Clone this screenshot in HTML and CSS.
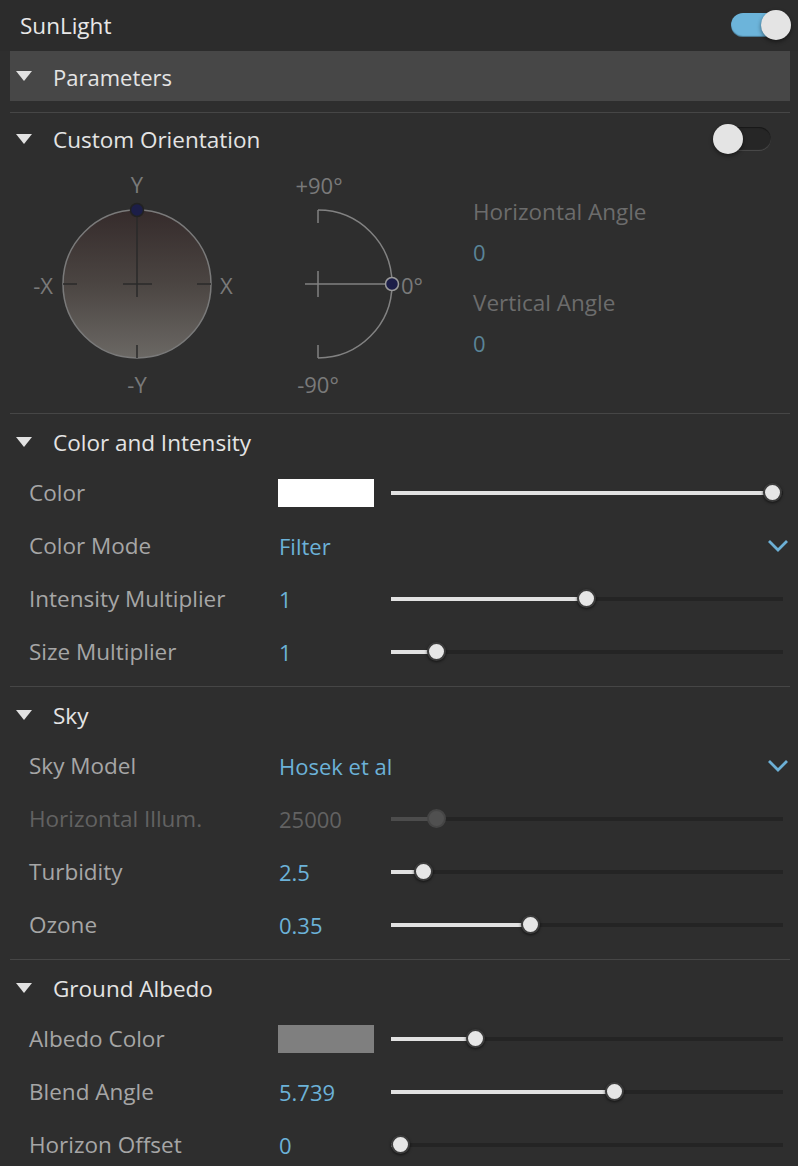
FILE: index.html
```html
<!DOCTYPE html>
<html>
<head>
<meta charset="utf-8">
<link rel="stylesheet" href="styles.css">
</head>
<body>
<div class="panel">
  <div class="topbar">
    <span class="title">SunLight</span>
    <span class="toggle on"><span class="knob"></span></span>
  </div>
  <div class="group-bar">
    <span class="tri"></span>
    <span class="group-title">Parameters</span>
  </div>

  <div class="section first">
    <div class="sec-head">
      <span class="tri"></span>
      <span class="sec-title">Custom Orientation</span>
      <span class="toggle off"><span class="knob"></span></span>
    </div>
    <div class="orient">
      <svg class="orient-svg" width="440" height="250" viewBox="0 163 440 250">
        <defs>
          <linearGradient id="sky" x1="0" y1="0" x2="0" y2="1">
            <stop offset="0" stop-color="#352b2b"/>
            <stop offset="0.5" stop-color="#4b4542"/>
            <stop offset="1" stop-color="#6b6864"/>
          </linearGradient>
        </defs>
        <circle cx="137" cy="284" r="74" fill="url(#sky)" stroke="#7a7a7a" stroke-width="1.5"/>
        <g stroke="#2a2a2a" stroke-width="1.5">
          <line x1="137" y1="212" x2="137" y2="297"/>
          <line x1="123" y1="284" x2="152" y2="284"/>
          <line x1="63" y1="284" x2="77" y2="284"/>
          <line x1="197" y1="284" x2="211" y2="284"/>
          <line x1="137" y1="345" x2="137" y2="358"/>
        </g>
        <circle cx="137" cy="210" r="6.5" fill="#1c1e48" stroke="#222" stroke-width="1.5"/>
        <g class="ax">
          <text x="137" y="193" text-anchor="middle">Y</text>
          <text x="137" y="393" text-anchor="middle">-Y</text>
          <text x="53" y="294" text-anchor="end">-X</text>
          <text x="220" y="294">X</text>
          <text x="319" y="194" text-anchor="middle">+90°</text>
          <text x="318" y="393" text-anchor="middle">-90°</text>
          <text x="401" y="294">0°</text>
        </g>
        <g stroke="#828282" stroke-width="1.5" fill="none">
          <path d="M318 210 A74 74 0 0 1 318 358"/>
          <line x1="318" y1="210" x2="318" y2="223"/>
          <line x1="318" y1="345" x2="318" y2="358"/>
          <line x1="318" y1="271" x2="318" y2="297"/>
          <line x1="305" y1="284" x2="392" y2="284"/>
        </g>
        <circle cx="392" cy="284" r="6.5" fill="#1c1e48" stroke="#9a9a9a" stroke-width="1.5"/>
      </svg>
      <div class="angles">
        <div class="ang-label">Horizontal Angle</div>
        <div class="ang-val">0</div>
        <div class="ang-label">Vertical Angle</div>
        <div class="ang-val">0</div>
      </div>
    </div>
  </div>

  <div class="section">
    <div class="sec-head">
      <span class="tri"></span>
      <span class="sec-title">Color and Intensity</span>
    </div>
    <div class="row">
      <span class="label">Color</span>
      <span class="val"><span class="swatch white"></span></span>
      <span class="slider" style="--p:1"><span class="fill"></span><span class="thumb"></span></span>
    </div>
    <div class="row">
      <span class="label">Color Mode</span>
      <span class="dropdown">
        <span class="val blue">Filter</span>
        <svg class="chev" width="22" height="14" viewBox="0 0 22 14"><path d="M2 2 L11 11 L20 2" fill="none" stroke="#6cb0d6" stroke-width="2.8"/></svg>
      </span>
    </div>
    <div class="row">
      <span class="label">Intensity Multiplier</span>
      <span class="val blue">1</span>
      <span class="slider" style="--p:0.499"><span class="fill"></span><span class="thumb"></span></span>
    </div>
    <div class="row">
      <span class="label">Size Multiplier</span>
      <span class="val blue">1</span>
      <span class="slider" style="--p:0.097"><span class="fill"></span><span class="thumb"></span></span>
    </div>
  </div>

  <div class="section">
    <div class="sec-head">
      <span class="tri"></span>
      <span class="sec-title">Sky</span>
    </div>
    <div class="row">
      <span class="label">Sky Model</span>
      <span class="dropdown">
        <span class="val blue">Hosek et al</span>
        <svg class="chev" width="22" height="14" viewBox="0 0 22 14"><path d="M2 2 L11 11 L20 2" fill="none" stroke="#6cb0d6" stroke-width="2.8"/></svg>
      </span>
    </div>
    <div class="row disabled">
      <span class="label">Horizontal Illum.</span>
      <span class="val">25000</span>
      <span class="slider" style="--p:0.097"><span class="fill"></span><span class="thumb"></span></span>
    </div>
    <div class="row">
      <span class="label">Turbidity</span>
      <span class="val blue">2.5</span>
      <span class="slider" style="--p:0.062"><span class="fill"></span><span class="thumb"></span></span>
    </div>
    <div class="row">
      <span class="label">Ozone</span>
      <span class="val blue">0.35</span>
      <span class="slider" style="--p:0.349"><span class="fill"></span><span class="thumb"></span></span>
    </div>
  </div>

  <div class="section">
    <div class="sec-head">
      <span class="tri"></span>
      <span class="sec-title">Ground Albedo</span>
    </div>
    <div class="row">
      <span class="label">Albedo Color</span>
      <span class="val"><span class="swatch grey"></span></span>
      <span class="slider" style="--p:0.201"><span class="fill"></span><span class="thumb"></span></span>
    </div>
    <div class="row">
      <span class="label">Blend Angle</span>
      <span class="val blue">5.739</span>
      <span class="slider" style="--p:0.574"><span class="fill"></span><span class="thumb"></span></span>
    </div>
    <div class="row">
      <span class="label">Horizon Offset</span>
      <span class="val blue">0</span>
      <span class="slider" style="--p:0"><span class="fill"></span><span class="thumb"></span></span>
    </div>
  </div>
</div>
</body>
</html>
```

FILE: styles.css
```css
html, body {
  margin: 0;
  padding: 0;
  background: #2e2e2e;
}
body {
  font-family: "Open Sans", "Noto Sans", sans-serif;
  width: 798px;
  height: 1166px;
  overflow: hidden;
}
.panel {
  display: flex;
  flex-direction: column;
}
.topbar {
  height: 51px;
  display: flex;
  align-items: center;
  justify-content: space-between;
  padding: 0 9px 0 20px;
  background: #2c2c2c;
}
.title {
  color: #e8e8e8;
  font-size: 22.5px;
}
.toggle {
  position: relative;
  height: 24px;
  border-radius: 12px;
  display: inline-block;
  flex: none;
}
.toggle.on {
  width: 58px;
  background: #6cb4da;
  box-shadow: inset 0 -1px 1px rgba(0,0,0,0.35);
  margin-top: -2px;
}
.toggle.off {
  width: 52px;
  background: #262626;
  box-shadow: inset 0 -1px 1px rgba(255,255,255,0.18), inset 0 1px 1px rgba(0,0,0,0.4);
  margin-right: 27px;
}
.knob {
  position: absolute;
  top: -3px;
  width: 30px;
  height: 30px;
  border-radius: 50%;
  background: #e4e4e4;
  box-shadow: 0 2px 4px rgba(0,0,0,0.45);
}
.toggle.on .knob { right: -2px; }
.toggle.off .knob { left: -6px; }

.tri {
  width: 0;
  height: 0;
  border-left: 8px solid transparent;
  border-right: 8px solid transparent;
  border-top: 10px solid #e2e2e2;
  margin-left: 16px;
  margin-right: 21px;
  flex: none;
}
.group-bar {
  height: 50px;
  margin: 0 8px 0 10px;
  background: #474747;
  display: flex;
  align-items: center;
}
.group-bar .tri { margin-left: 6px; }
.group-title {
  color: #e4e4e4;
  font-size: 22px;
  margin-top: 1px;
}
.section {
  border-top: 1px solid #464646;
  margin: 0 8px 0 10px;
  padding-bottom: 8px;
}
.section.first {
  margin-top: 11px;
  padding-bottom: 0;
}
.sec-head {
  height: 48px;
  padding-top: 4px;
  display: flex;
  align-items: center;
  margin-left: -10px;
  margin-right: -8px;
}
.section.first .sec-head { padding-top: 2px; }
.sec-title {
  color: #e4e4e4;
  font-size: 22.5px;
  flex: 1;
}
.orient {
  height: 250px;
  display: flex;
  margin-left: -10px;
}
.orient-svg { display: block; flex: none; }
.ax {
  fill: #7a7a7a;
  font-family: "Open Sans", "Noto Sans", sans-serif;
  font-size: 22px;
}
.angles {
  margin-left: 33px;
  padding-top: 30px;
  display: flex;
  flex-direction: column;
}
.ang-label {
  color: #6c6c6c;
  font-size: 22.5px;
  height: 40px;
  line-height: 38px;
}
.ang-val {
  color: #5a8497;
  font-size: 22px;
  height: 51px;
  line-height: 38px;
}
.row {
  height: 53px;
  display: flex;
  align-items: center;
  margin-left: -10px;
  margin-right: -8px;
}
.label {
  width: 279px;
  padding-left: 29px;
  box-sizing: border-box;
  color: #a6a6a6;
  font-size: 22.5px;
  flex: none;
}
.val {
  width: 112px;
  flex: none;
  font-size: 22px;
  color: #a6a6a6;
  display: flex;
  align-items: center;
}
.val.blue { color: #6cb2d8; }
.swatch {
  width: 96px;
  height: 28px;
  display: block;
  margin-left: -1px;
}
.swatch.white { background: #ffffff; }
.swatch.grey { background: #7f7f7f; }
.dropdown {
  display: flex;
  align-items: center;
  flex: 1;
  justify-content: space-between;
  padding-right: 9px;
}
.dropdown .val { width: auto; }
.chev { display: block; margin-top: 1px; }
.slider {
  position: relative;
  width: 392px;
  height: 4px;
  background: #242424;
  flex: none;
}
.fill {
  position: absolute;
  left: 0;
  top: 0;
  height: 4px;
  width: calc(10px + var(--p) * (100% - 20px));
  background: #e2e2e2;
}
.thumb {
  position: absolute;
  top: 50%;
  left: calc(10px + var(--p) * (100% - 20px));
  width: 15px;
  height: 15px;
  margin: -10px 0 0 -10px;
  border-radius: 50%;
  background: #e6e6e6;
  border: 2.5px solid #3c3c3c;
  box-shadow: 0 1px 3px rgba(0,0,0,0.6);
}
.row.disabled .label,
.row.disabled .val { color: #626262; }
.row.disabled .fill { background: #4c4c4c; }
.row.disabled .thumb { background: #505050; border-color: #454545; box-shadow: none; }
```
